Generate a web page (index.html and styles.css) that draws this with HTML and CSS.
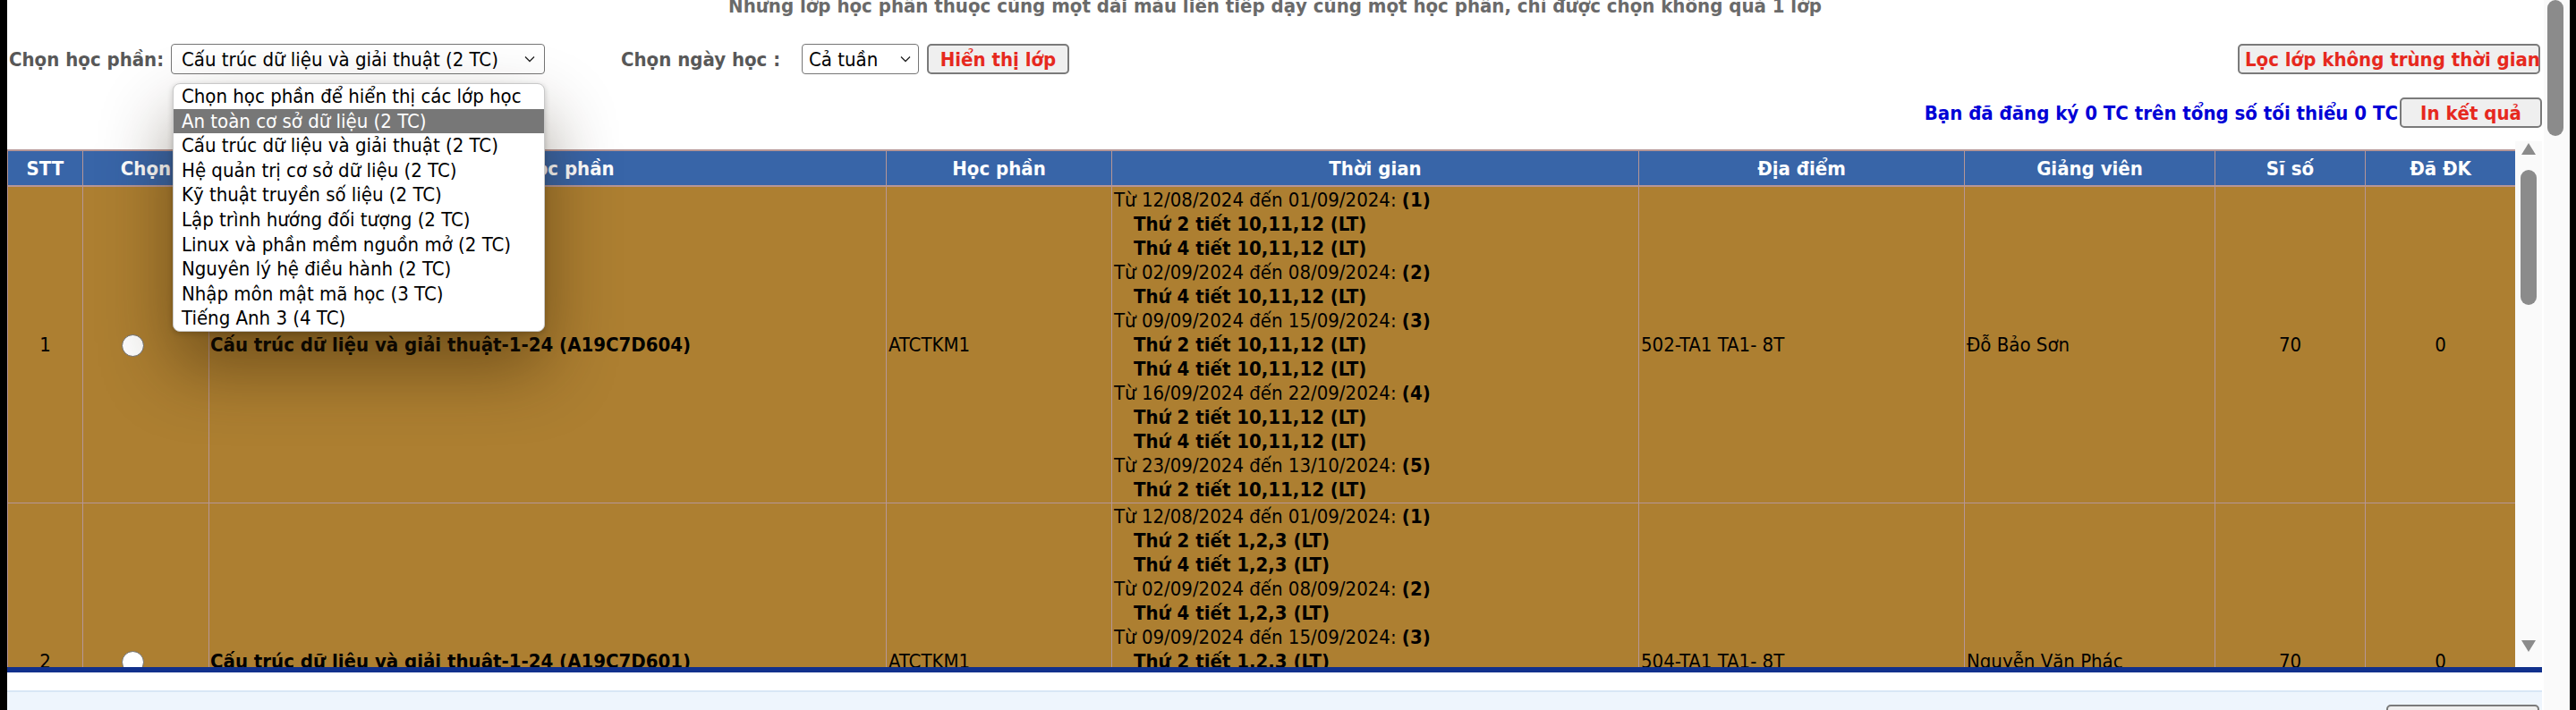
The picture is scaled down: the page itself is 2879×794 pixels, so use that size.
FILE: index.html
```html
<!DOCTYPE html>
<html lang="vi">
<head>
<meta charset="utf-8">
<title>Đăng ký học phần</title>
<link rel="stylesheet" href="styles.css">
</head>
<body>
<div class="page">
  <div class="title">Những lớp học phần thuộc cùng một dải màu liên tiếp dạy cùng một học phần, chỉ được chọn không quá 1 lớp</div>
  <div class="controls">
    <span class="label label-course">Chọn học phần:</span>
    <div class="select select-course"><span>Cấu trúc dữ liệu và giải thuật (2 TC)</span><svg class="chev" viewBox="0 0 12 8" width="12" height="8"><path d="M1 1.5 L6 6.5 L11 1.5" fill="none" stroke="#222" stroke-width="1.3"/></svg></div>
    <span class="label label-day">Chọn ngày học :</span>
    <div class="select select-day"><span>Cả tuần</span><svg class="chev" viewBox="0 0 12 8" width="12" height="8"><path d="M1 1.5 L6 6.5 L11 1.5" fill="none" stroke="#222" stroke-width="1.3"/></svg></div>
    <button class="btn btn-show">Hiển thị lớp</button>
    <button class="btn btn-filter">Lọc lớp không trùng thời gian</button>
  </div>
  <div class="summary">
    <span class="summary-text">Bạn đã đăng ký 0 TC trên tổng số tối thiểu 0 TC</span>
    <button class="btn btn-print">In kết quả</button>
  </div>

  <div class="grid-wrap">
    <div class="viewport">
      <table class="classes">
        <colgroup>
          <col class="c-stt"><col class="c-chon"><col class="c-lop"><col class="c-hp"><col class="c-tg"><col class="c-dd"><col class="c-gv"><col class="c-ss"><col class="c-dk">
        </colgroup>
        <thead>
          <tr><th>STT</th><th class="th-chon">Chọn</th><th>Lớp học phần</th><th>Học phần</th><th>Thời gian</th><th>Địa điểm</th><th>Giảng viên</th><th>Sĩ số</th><th>Đã ĐK</th></tr>
        </thead>
        <tbody>
          <tr>
            <td class="center">1</td>
            <td class="center"><span class="radio"></span></td>
            <td class="bold">Cấu trúc dữ liệu và giải thuật-1-24 (A19C7D604)</td>
            <td>ATCTKM1</td>
            <td>
              <div>Từ 12/08/2024 đến 01/09/2024: <b>(1)</b></div>
              <div class="slot">Thứ 2 tiết 10,11,12 (LT)</div>
              <div class="slot">Thứ 4 tiết 10,11,12 (LT)</div>
              <div>Từ 02/09/2024 đến 08/09/2024: <b>(2)</b></div>
              <div class="slot">Thứ 4 tiết 10,11,12 (LT)</div>
              <div>Từ 09/09/2024 đến 15/09/2024: <b>(3)</b></div>
              <div class="slot">Thứ 2 tiết 10,11,12 (LT)</div>
              <div class="slot">Thứ 4 tiết 10,11,12 (LT)</div>
              <div>Từ 16/09/2024 đến 22/09/2024: <b>(4)</b></div>
              <div class="slot">Thứ 2 tiết 10,11,12 (LT)</div>
              <div class="slot">Thứ 4 tiết 10,11,12 (LT)</div>
              <div>Từ 23/09/2024 đến 13/10/2024: <b>(5)</b></div>
              <div class="slot">Thứ 2 tiết 10,11,12 (LT)</div>
            </td>
            <td>502-TA1 TA1- 8T</td>
            <td>Đỗ Bảo Sơn</td>
            <td class="center">70</td>
            <td class="center">0</td>
          </tr>
          <tr>
            <td class="center">2</td>
            <td class="center"><span class="radio"></span></td>
            <td class="bold">Cấu trúc dữ liệu và giải thuật-1-24 (A19C7D601)</td>
            <td>ATCTKM1</td>
            <td>
              <div>Từ 12/08/2024 đến 01/09/2024: <b>(1)</b></div>
              <div class="slot">Thứ 2 tiết 1,2,3 (LT)</div>
              <div class="slot">Thứ 4 tiết 1,2,3 (LT)</div>
              <div>Từ 02/09/2024 đến 08/09/2024: <b>(2)</b></div>
              <div class="slot">Thứ 4 tiết 1,2,3 (LT)</div>
              <div>Từ 09/09/2024 đến 15/09/2024: <b>(3)</b></div>
              <div class="slot">Thứ 2 tiết 1,2,3 (LT)</div>
              <div class="slot">Thứ 4 tiết 1,2,3 (LT)</div>
              <div>Từ 16/09/2024 đến 22/09/2024: <b>(4)</b></div>
              <div class="slot">Thứ 2 tiết 1,2,3 (LT)</div>
              <div class="slot">Thứ 4 tiết 1,2,3 (LT)</div>
              <div>Từ 23/09/2024 đến 13/10/2024: <b>(5)</b></div>
              <div class="slot">Thứ 2 tiết 1,2,3 (LT)</div>
            </td>
            <td>504-TA1 TA1- 8T</td>
            <td>Nguyễn Văn Phác</td>
            <td class="center">70</td>
            <td class="center">0</td>
          </tr>
        </tbody>
      </table>
    </div>
    <div class="vscroll">
      <span class="arrow arrow-up"></span>
      <span class="thumb inner-thumb"></span>
      <span class="vspacer"></span>
      <span class="arrow arrow-down"></span>
    </div>
  </div>
  <div class="blue-bar"></div>
  <div class="footer-panel">
    <button class="btn btn-footer">&nbsp;</button>
  </div>

  <ul class="dropdown">
    <li>Chọn học phần để hiển thị các lớp học</li>
    <li class="active">An toàn cơ sở dữ liệu (2 TC)</li>
    <li>Cấu trúc dữ liệu và giải thuật (2 TC)</li>
    <li>Hệ quản trị cơ sở dữ liệu (2 TC)</li>
    <li>Kỹ thuật truyền số liệu (2 TC)</li>
    <li>Lập trình hướng đối tượng (2 TC)</li>
    <li>Linux và phần mềm nguồn mở (2 TC)</li>
    <li>Nguyên lý hệ điều hành (2 TC)</li>
    <li>Nhập môn mật mã học (3 TC)</li>
    <li>Tiếng Anh 3 (4 TC)</li>
  </ul>
</div>
<div class="page-scroll"><span class="page-thumb"></span></div>
</body>
</html>
```
FILE: styles.css
```css
html, body {
  margin: 0;
  height: 794px;
  overflow: hidden;
}
body {
  display: flex;
  background: #000;
  padding: 0 7px 0 8px;
  box-sizing: border-box;
  font-family: "DejaVu Sans Condensed", "DejaVu Sans", sans-serif;
  font-stretch: condensed;
  font-size: 22px;
  color: #000;
}
.page {
  position: relative;
  flex: 1;
  background: #fff;
  overflow: hidden;
  padding-right: 1px;
}
.page-scroll {
  width: 29px;
  background: #fafafa;
  display: flex;
  justify-content: center;
}
.page-thumb {
  display: block;
  width: 18px;
  height: 152px;
  margin-left: -4px;
  background: #8b8b8b;
  border-radius: 9px;
}
.title {
  margin-top: -6px;
  height: 26px;
  line-height: 26px;
  text-align: center;
  font-weight: bold;
  color: #6a6a6a;
  white-space: nowrap;
}
.controls {
  display: flex;
  align-items: center;
  margin-top: 29px;
  height: 34px;
  padding-left: 2px;
  padding-right: 3px;
}
.label {
  font-weight: bold;
  color: #585858;
  white-space: nowrap;
}
.label-course { width: 181px; }
.label-day { width: 202px; margin-left: 85px; }
.select {
  box-sizing: border-box;
  height: 34px;
  border: 1px solid #767676;
  border-radius: 4px;
  display: flex;
  align-items: center;
  justify-content: space-between;
  padding: 0 10px 0 11px;
  white-space: nowrap;
  background: #fff;
}
.select-course { width: 418px; }
.select-day { width: 131px; padding-left: 7px; padding-right: 8px; }
.chev { flex: none; }
.btn {
  box-sizing: border-box;
  height: 34px;
  border: 2px solid #7a7a7a;
  border-radius: 5px;
  background: #efefef;
  color: #e6291e;
  font: inherit;
  font-weight: bold;
  padding: 0 6px;
  white-space: nowrap;
}
.btn-show { width: 159px; margin-left: 9px; }
.btn-filter { width: 338px; margin-left: auto; }
.summary {
  display: flex;
  align-items: center;
  justify-content: flex-end;
  margin-top: 26px;
  height: 34px;
  padding-right: 1px;
}
.summary-text {
  color: #0000d6;
  font-weight: bold;
  margin-right: 2px;
}
.btn-print { width: 159px; }

.grid-wrap {
  display: flex;
  margin-top: 15px;
  height: 588px;
  margin-right: 1px;
}
.viewport {
  width: 2803px;
  overflow: hidden;
}
.classes {
  margin-top: 9px;
  border-collapse: collapse;
  table-layout: fixed;
  width: 2803px;
}
.c-stt { width: 84px; }
.c-chon { width: 141px; }
.c-lop { width: 757px; }
.c-hp { width: 252px; }
.c-tg { width: 589px; }
.c-dd { width: 364px; }
.c-gv { width: 280px; }
.c-ss { width: 168px; }
.c-dk { width: 168px; }
.classes th {
  background: #3865a8;
  color: #fff;
  font-weight: bold;
  height: 38px;
  border: 1px solid #b69696;
  border-top-width: 2px;
  border-bottom-width: 2px;
  padding: 0;
  white-space: nowrap;
}
.classes td {
  background: #ad7f31;
  border: 1px solid #b69696;
  padding: 1px 2px;
  line-height: 27px;
  vertical-align: middle;
  white-space: nowrap;
}
.classes td.center { text-align: center; }
.classes td.bold { font-weight: bold; padding-left: 1px; }
.slot { font-weight: bold; padding-left: 22px; }
.radio {
  display: inline-block;
  vertical-align: middle;
  box-sizing: border-box;
  width: 25px;
  height: 25px;
  border: 1.5px solid #6f6f6f;
  border-radius: 50%;
  background: #fff;
  margin-right: 30px;
}
.vscroll {
  flex: 1;
  background: #fafafa;
  display: flex;
  flex-direction: column;
  align-items: center;
  padding: 2px 0 17px;
}
.arrow {
  width: 0;
  height: 0;
  border-left: 8px solid transparent;
  border-right: 8px solid transparent;
}
.arrow-up { border-bottom: 13px solid #8b8b8b; }
.arrow-down { border-top: 13px solid #8b8b8b; }
.inner-thumb {
  display: block;
  width: 18px;
  height: 151px;
  margin-top: 17px;
  background: #8b8b8b;
  border-radius: 9px;
}
.vspacer { flex: 1; }
.blue-bar {
  height: 6px;
  background: #10308c;
  margin-right: 1px;
}
.footer-panel {
  margin-top: 20px;
  margin-right: 1px;
  height: 60px;
  background: #eef5fd;
  border-top: 2px solid #d8e6f6;
  display: flex;
  justify-content: flex-end;
  padding-right: 3px;
}
.btn-footer {
  margin-top: 14px;
  width: 171px;
  height: 34px;
}
.dropdown {
  position: absolute;
  left: 185px;
  top: 93px;
  width: 416px;
  height: 278px;
  box-sizing: border-box;
  margin: 0;
  padding: 0;
  list-style: none;
  background: #fff;
  border: 1px solid #c9c9c9;
  border-radius: 8px;
  box-shadow: 0 40px 80px rgba(40, 25, 0, 0.45), 0 2px 6px rgba(0, 0, 0, 0.2);
  overflow: hidden;
  font-stretch: normal;
  font-family: "DejaVu Sans Condensed", "DejaVu Sans", sans-serif;
}
.dropdown li {
  height: 27.6px;
  line-height: 27.6px;
  padding-left: 9px;
  white-space: nowrap;
}
.dropdown li.active {
  background: #777;
  color: #fff;
}
```
